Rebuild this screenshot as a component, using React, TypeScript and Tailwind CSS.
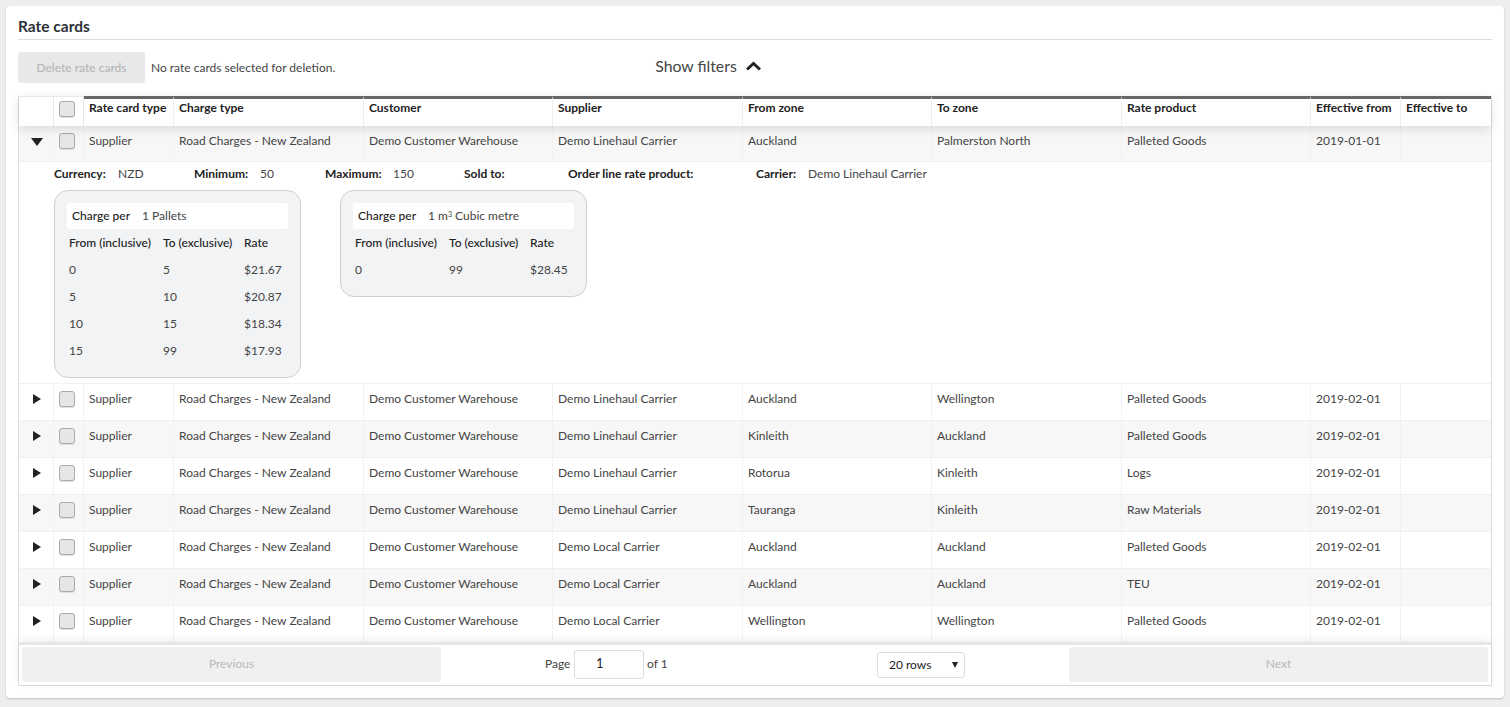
const cols = ["w-[90px]", "w-[190px]", "w-[189px]", "w-[190px]", "w-[189px]", "w-[190px]", "w-[189px]", "w-[90px]", "w-[90px]"];
const headers = ["Rate card type", "Charge type", "Customer", "Supplier", "From zone", "To zone", "Rate product", "Effective from", "Effective to"];

const D = "Demo Customer Warehouse";
const rows = [
  ["Demo Linehaul Carrier", "Auckland", "Wellington", "Palleted Goods"],
  ["Demo Linehaul Carrier", "Kinleith", "Auckland", "Palleted Goods"],
  ["Demo Linehaul Carrier", "Rotorua", "Kinleith", "Logs"],
  ["Demo Linehaul Carrier", "Tauranga", "Kinleith", "Raw Materials"],
  ["Demo Local Carrier", "Auckland", "Auckland", "Palleted Goods"],
  ["Demo Local Carrier", "Auckland", "Auckland", "TEU"],
  ["Demo Local Carrier", "Wellington", "Wellington", "Palleted Goods"],
];

function Checkbox() {
  return <div className="h-[16px] w-[16px] rounded-[3px] border border-[#ababab] bg-[#e6e6e6] shadow-[0_1px_0_#e0e0e0]" />;
}

function Row({ cells, open, odd, h }: { cells: string[]; open?: boolean; odd?: boolean; h: string }) {
  return (
    <div className={`flex ${h} ${odd ? "bg-[#f7f7f7]" : "bg-white"} border-b border-[#f0f0f0]`}>
      <div className={`flex w-[35px] shrink-0 justify-center border-r border-[#f2f2f2] pl-[2px] ${open ? "pt-[12px]" : "pt-[10px]"}`}>
        {open ? (
          <div className="h-0 w-0 border-x-[6px] border-t-[8px] border-x-transparent border-t-[#222]" />
        ) : (
          <div className="h-0 w-0 border-y-[5.500px] border-l-[8px] border-y-transparent border-l-[#222]" />
        )}
      </div>
      <div className="w-[30px] shrink-0 border-r border-[#f2f2f2] pt-[7px] pl-[5px]">
        <Checkbox />
      </div>
      {cells.map((c, i) => (
        <div key={i} className={`${cols[i]} shrink-0 border-r border-[#f2f2f2] px-[5px] pt-[6px] text-[12px] leading-[18px] text-[#444] last:border-r-0`}>
          {c}
        </div>
      ))}
    </div>
  );
}

function RateBox({ per, sup, lines, w }: { per: string; sup?: string; lines: string[][]; w: string }) {
  return (
    <div className={`${w} self-start rounded-[14px] border border-[#cdd0d3] bg-[#f2f3f5] px-[12px] pt-[12px] pb-[13px]`}>
      <div className="flex h-[26px] items-center rounded-[3px] bg-white px-[5px] text-[12px] text-[#444]">
        <span className="mr-[12px] font-medium text-[#222]">Charge per</span>
        <span>
          {per}
          {sup && <sup className="text-[7px]">3</sup>}
          {sup}
        </span>
      </div>
      <div className="flex h-[27px] items-center text-[12px] font-medium text-[#222]">
        <span className="w-[96px] pl-[2px] whitespace-nowrap">From (inclusive)</span>
        <span className="w-[81px] whitespace-nowrap">To (exclusive)</span>
        <span>Rate</span>
      </div>
      {lines.map((l, i) => (
        <div key={i} className="flex h-[27px] items-center text-[12px] text-[#444]">
          <span className="w-[96px] pl-[2px]">{l[0]}</span>
          <span className="w-[81px]">{l[1]}</span>
          <span>{l[2]}</span>
        </div>
      ))}
    </div>
  );
}

export default function App() {
  return (
    <div className="h-[707px] overflow-hidden bg-[#eeeeee] p-[6px] font-['Lato',sans-serif] text-[#222]">
      <div className="h-[692px] rounded-[4px] bg-white px-[12px] pt-[11px] shadow-[0_1px_2px_rgba(0,0,0,0.2)]">
        <h1 className="box-content h-[22px] border-b border-[#dddddd] text-[15.5px] leading-[18px] font-bold text-[#2b3238]">Rate cards</h1>

        <div className="mt-[12px] flex h-[31px] items-center">
          <button className="h-[31px] w-[127px] rounded-[3px] bg-[#e8e8e8] text-[12px] font-medium text-[#b5b5b5]">Delete rate cards</button>
          <span className="ml-[6px] text-[12px] text-[#444]">No rate cards selected for deletion.</span>
          <div className="mb-[3px] ml-[320px] flex items-center gap-[9px] text-[15.800px] text-[#444]">
            Show filters
            <svg width="15" height="10" viewBox="0 0 15 10">
              <path d="M1 8.500 7.500 2.500 14 8.500" fill="none" stroke="#222" strokeWidth="3" />
            </svg>
          </div>
        </div>

        <div className="mt-[13px] h-[590px] w-[1474px] border border-t-0 border-[#dddddd]">
          <div className="relative z-10 flex h-[30px] bg-white shadow-[0_3px_12px_rgba(0,0,0,0.12)]">
            <div className="w-[35px] shrink-0 border-t border-r border-[#e8e8e8]" />
            <div className="w-[30px] shrink-0 border-t border-r border-[#e8e8e8] pt-[4px] pl-[5px]">
              <Checkbox />
            </div>
            {headers.map((h, i) => (
              <div key={h} className={`${cols[i]} shrink-0 border-t-[3px] border-r border-t-[#666666] border-r-[#eeeeee] px-[5px] text-[12px] leading-[18px] font-bold whitespace-nowrap text-[#222] last:border-r-0`}>
                {h}
              </div>
            ))}
          </div>

          <Row open odd h="h-[36px]" cells={["Supplier", "Road Charges - New Zealand", D, "Demo Linehaul Carrier", "Auckland", "Palmerston North", "Palleted Goods", "2019-01-01", ""]} />

          <div className="h-[222px] border-b border-[#f0f0f0] bg-white pl-[35px]">
            <div className="flex h-[28px] items-center pb-[4px] text-[12px]">
              <span className="w-[52px] font-bold">Currency:</span><span className="ml-[12px] w-[76px] text-[#444]">NZD</span>
              <span className="w-[54px] font-bold">Minimum:</span><span className="ml-[12px] w-[65px] text-[#444]">50</span>
              <span className="w-[56px] font-bold">Maximum:</span><span className="ml-[12px] w-[71px] text-[#444]">150</span>
              <span className="w-[41px] font-bold">Sold to:</span>
              <span className="ml-[63px] w-[126px] font-bold">Order line rate product:</span>
              <span className="ml-[62px] w-[40px] font-bold">Carrier:</span><span className="ml-[12px] text-[#444]">Demo Linehaul Carrier</span>
            </div>
            <div className="flex gap-[39px]">
              <RateBox w="w-[247px]" per="1 Pallets" lines={[["0", "5", "$21.67"], ["5", "10", "$20.87"], ["10", "15", "$18.34"], ["15", "99", "$17.93"]]} />
              <RateBox w="w-[247px]" per="1 m" sup=" Cubic metre" lines={[["0", "99", "$28.45"]]} />
            </div>
          </div>

          {rows.map((r, i) => (
            <Row key={i} odd={i % 2 === 1} h="h-[37px]" cells={["Supplier", "Road Charges - New Zealand", D, r[0], r[1], r[2], r[3], "2019-02-01", ""]} />
          ))}

          <div className="relative flex h-[42px] items-center border-t-2 border-[#e6e6e6] bg-white px-[3px] pb-[2px] shadow-[0_-3px_10px_rgba(0,0,0,0.07)]">
            <button className="h-[35px] w-[419px] rounded-[3px] bg-[#f0f0f0] text-[12px] text-[#b8b8b8]">Previous</button>
            <div className="flex flex-1 items-center text-[12px] text-[#444]">
              <span className="ml-[104px] w-[26px]">Page</span>
              <div className="ml-[3px] flex h-[29px] w-[70px] items-center rounded-[3px] border border-[#dddddd] pl-[21px] text-[13px] text-[#222]">1</div>
              <span className="ml-[3px] w-[21px]">of 1</span>
              <div className="mt-[2px] ml-[209px] flex h-[26px] w-[88px] items-center justify-between rounded-[3px] border border-[#dddddd] pr-[6px] pl-[11px] text-[#222]">
                20 rows
                <span className="h-0 w-0 border-x-[3.500px] border-t-[6px] border-x-transparent border-t-[#222]" />
              </div>
            </div>
            <button className="h-[35px] w-[419px] rounded-[3px] bg-[#f0f0f0] text-[12px] text-[#b8b8b8]">Next</button>
          </div>
        </div>
      </div>
    </div>
  );
}
